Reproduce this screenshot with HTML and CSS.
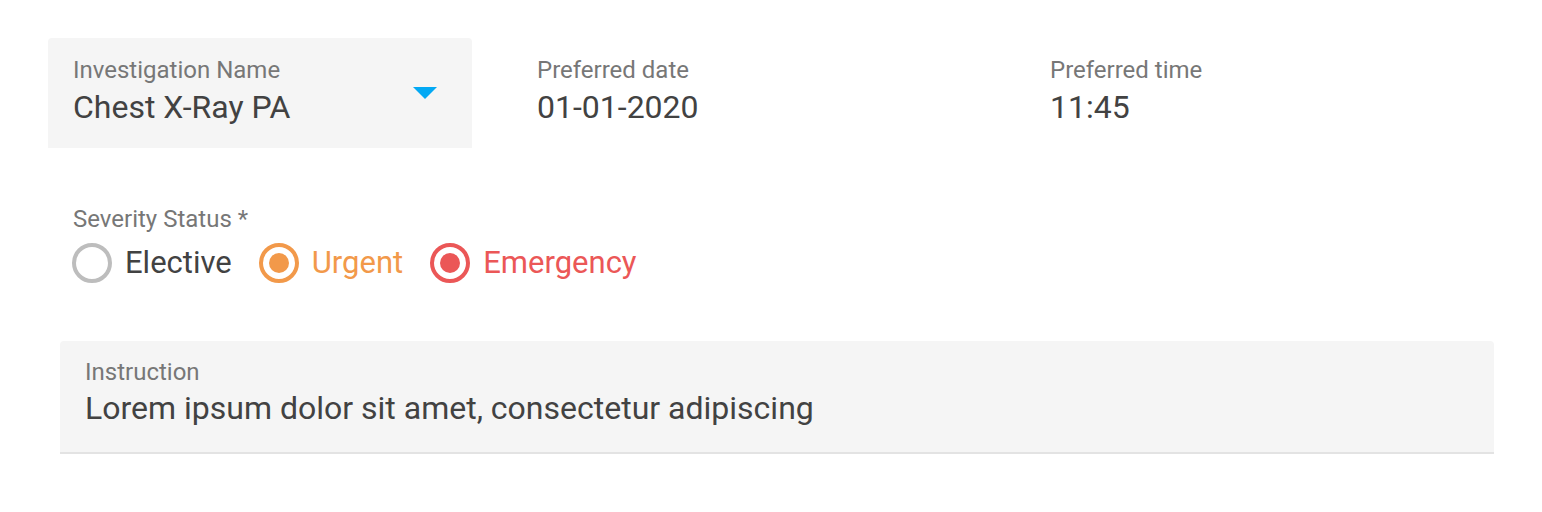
FILE: index.html
```html
<!DOCTYPE html>
<html lang="en">
<head>
<meta charset="utf-8">
<title>Investigation</title>
<link rel="stylesheet" href="styles.css">
</head>
<body>
<main class="page">
  <section class="top-row">
    <div class="field field--filled">
      <div class="label">Investigation Name</div>
      <div class="value">Chest X-Ray PA</div>
      <span class="dropdown-arrow"></span>
    </div>
    <div class="field">
      <div class="label">Preferred date</div>
      <div class="value">01-01-2020</div>
    </div>
    <div class="field">
      <div class="label">Preferred time</div>
      <div class="value">11:45</div>
    </div>
  </section>

  <section class="severity">
    <div class="label">Severity Status *</div>
    <div class="radio-group">
      <label class="radio">
        <span class="radio-circle"></span>
        <span class="radio-text">Elective</span>
      </label>
      <label class="radio radio--urgent">
        <span class="radio-circle"><span class="radio-dot"></span></span>
        <span class="radio-text">Urgent</span>
      </label>
      <label class="radio radio--emergency">
        <span class="radio-circle"><span class="radio-dot"></span></span>
        <span class="radio-text">Emergency</span>
      </label>
    </div>
  </section>

  <section class="instruction">
    <div class="label">Instruction</div>
    <div class="value value--tight">Lorem ipsum dolor sit amet, consectetur adipiscing</div>
  </section>
</main>
</body>
</html>
```

FILE: styles.css
```css
* {
  box-sizing: border-box;
}

body {
  margin: 0;
  background: #ffffff;
  font-family: Roboto, "Liberation Sans", Arial, sans-serif;
  color: #424242;
}

.page {
  padding: 38px 48px 0 48px;
}

.top-row {
  display: grid;
  grid-template-columns: 424px 473px 1fr;
  column-gap: 40px;
}

.field {
  padding: 18px 25px 22px;
  position: relative;
}

.field--filled {
  background: #f5f5f5;
  border-radius: 4px 4px 0 0;
}

.label {
  font-size: 24px;
  line-height: 28px;
  color: #777777;
}

.value {
  font-size: 32px;
  line-height: 38px;
  margin-top: 4px;
  color: #424242;
}

.value--tight {
  margin-top: 3px;
}

.dropdown-arrow {
  position: absolute;
  right: 35px;
  top: 49px;
  width: 0;
  height: 0;
  border-left: 12px solid transparent;
  border-right: 12px solid transparent;
  border-top: 12px solid #03a9f4;
}

.severity {
  margin-top: 57px;
  padding-left: 25px;
}

.radio-group {
  display: flex;
  align-items: center;
  gap: 27px;
  margin-top: 10px;
  margin-left: -1px;
}

.radio {
  display: flex;
  align-items: center;
  gap: 13px;
  font-size: 31px;
  line-height: 38px;
  color: #424242;
}

.radio-circle {
  width: 40px;
  height: 40px;
  border-radius: 50%;
  border: 4px solid #bdbdbd;
  display: flex;
  align-items: center;
  justify-content: center;
}

.radio-dot {
  width: 20px;
  height: 20px;
  border-radius: 50%;
  background: currentColor;
}

.radio--urgent {
  color: #f2994a;
}

.radio--urgent .radio-circle {
  border-color: #f2994a;
}

.radio--emergency {
  color: #eb5757;
}

.radio--emergency .radio-circle {
  border-color: #eb5757;
}

.instruction {
  margin: 58px 0 0 12px;
  padding: 17px 25px 25px;
  background: #f5f5f5;
  border-radius: 4px 4px 0 0;
  border-bottom: 2px solid #e3e3e3;
}
```
